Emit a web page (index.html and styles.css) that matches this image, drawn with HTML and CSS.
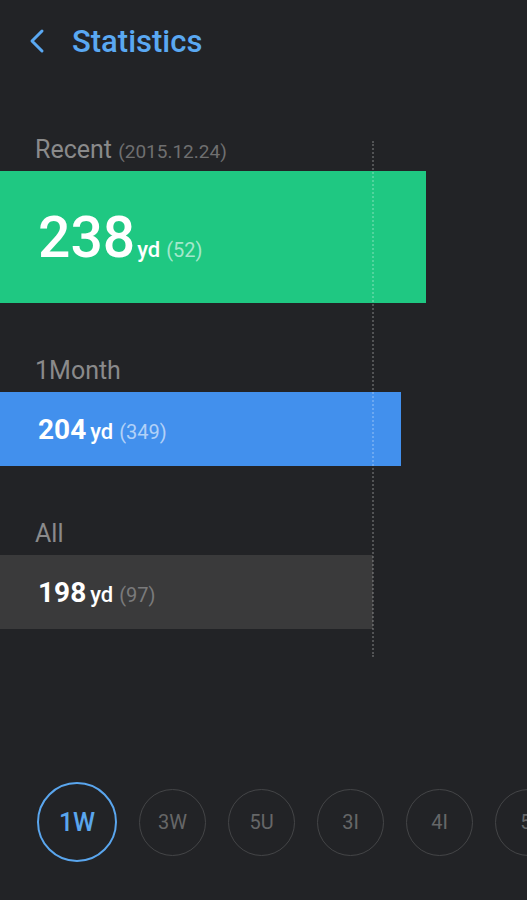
FILE: index.html
```html
<html>
  <head>
    <title>Statistics</title>
    <link rel="stylesheet" href="styles.css">
  </head>
  <body>
    <div class="header">
      <svg class="back" width="18" height="26" viewBox="0 0 18 26">
        <path d="M14 3 L4 13 L14 23" fill="none" stroke="#5aa8f2" stroke-width="3" stroke-linecap="round" stroke-linejoin="round"/>
      </svg>
      <h1 class="title">Statistics</h1>
    </div>

    <div class="chart">
      <div class="guide"></div>

      <div class="section first">
        <div class="label">Recent <span class="date">(2015.12.24)</span></div>
        <div class="bar bar-recent" style="width: 426px">
          <div class="amount">
            <span class="value">238</span><span class="unit">yd</span><span class="count">(52)</span>
          </div>
        </div>
      </div>

      <div class="section">
        <div class="label">1Month</div>
        <div class="bar bar-month" style="width: 401px">
          <div class="amount">
            <span class="value">204</span><span class="unit">yd</span><span class="count">(349)</span>
          </div>
        </div>
      </div>

      <div class="section">
        <div class="label">All</div>
        <div class="bar bar-all" style="width: 373px">
          <div class="amount">
            <span class="value">198</span><span class="unit">yd</span><span class="count">(97)</span>
          </div>
        </div>
      </div>
    </div>

    <div class="ranges">
      <div class="range active">1W</div>
      <div class="range">3W</div>
      <div class="range">5U</div>
      <div class="range">3I</div>
      <div class="range">4I</div>
      <div class="range">5I</div>
    </div>
  </body>
</html>
```

FILE: styles.css
```css
body {
  margin: 0;
  background: #222326;
  font-family: Roboto, "Noto Sans", sans-serif;
  overflow: hidden;
  width: 527px;
  height: 900px;
}

.header {
  height: 82px;
  display: flex;
  align-items: center;
  padding-left: 28px;
}

.back {
  display: block;
}

h1.title {
  margin: 0 0 0 26px;
  font-size: 31px;
  font-weight: 500;
  color: #5aa8f2;
}

.chart {
  position: relative;
  padding-top: 55px;
}

/* dotted guide line over the bars */
.guide {
  position: absolute;
  left: 372px;
  top: 59px;
  height: 516px;
  border-left: 2px dotted rgba(255, 255, 255, 0.22);
}

.section {
  margin-top: 55px;
}

.section.first {
  margin-top: 0;
}

.label {
  padding-left: 35px;
  height: 26px;
  line-height: 26px;
  margin-bottom: 8px;
  font-size: 25px;
  color: #8a8a8b;
}

.label .date {
  font-size: 19px;
  color: #6f6f70;
}

.bar {
  display: flex;
  align-items: center;
  padding-left: 38px;
  box-sizing: border-box;
  color: #fff;
}

.amount {
  display: flex;
  align-items: baseline;
}

.bar-recent {
  height: 132px;
  background: #1fc882;
}

.bar-month {
  height: 74px;
  background: #4290ed;
  margin-top: 2px;
}

.bar-all {
  height: 74px;
  background: #3a3a3b;
  margin-top: 4px;
}

.bar .value {
  font-size: 28px;
  font-weight: 700;
}

.bar .unit {
  margin-left: 4px;
  font-size: 22px;
  font-weight: 500;
}

.bar .count {
  margin-left: 6px;
  font-size: 20px;
  color: rgba(255, 255, 255, 0.6);
}

.bar-all .count {
  color: #7a7a7b;
}

.bar-recent .value {
  font-size: 57px;
  font-weight: 500;
}

.bar-recent .unit {
  margin-left: 2px;
}

.ranges {
  margin-top: 153px;
  padding-left: 37px;
  display: flex;
  align-items: center;
  gap: 22px;
}

.range {
  flex-shrink: 0;
  width: 67px;
  height: 67px;
  box-sizing: border-box;
  border: 1.5px solid #444547;
  border-radius: 50%;
  display: flex;
  align-items: center;
  justify-content: center;
  font-size: 20px;
  color: #666768;
}

.range.active {
  width: 80px;
  height: 80px;
  border: 2.5px solid #5aa6ee;
  font-size: 25px;
  font-weight: 500;
  color: #5aa6ee;
}
```
